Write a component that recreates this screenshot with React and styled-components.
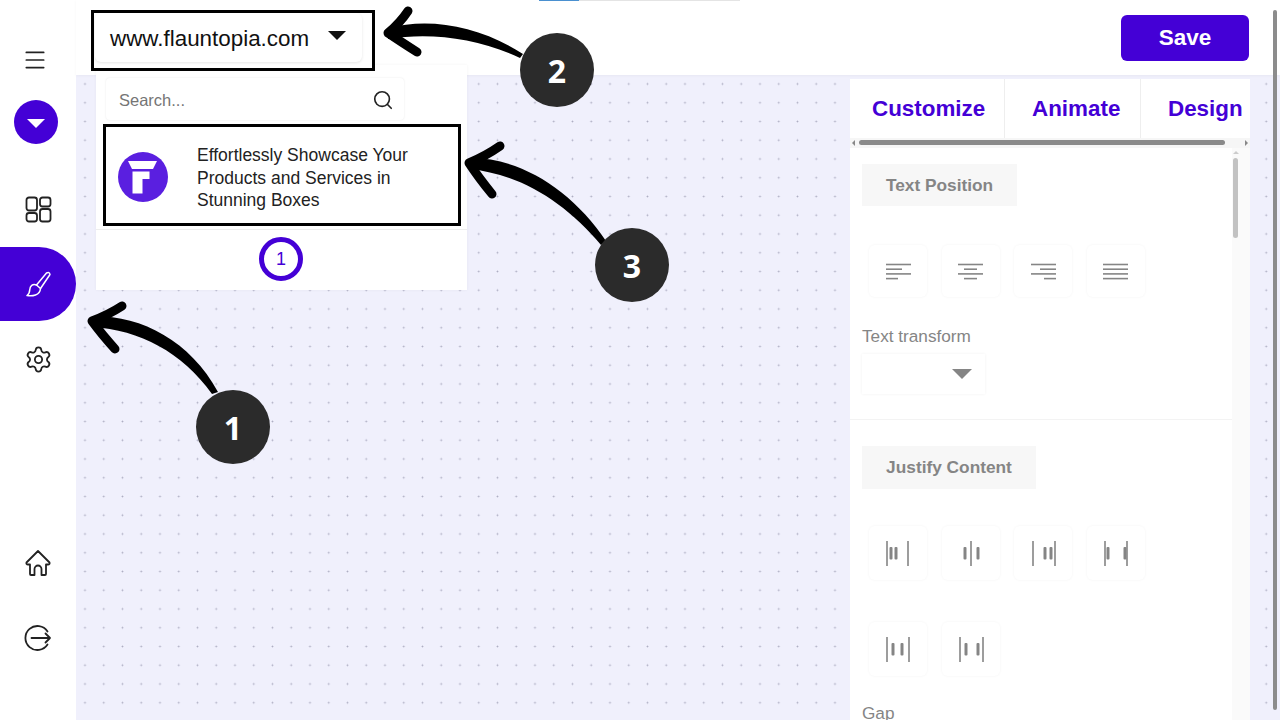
import React from "react";
import styled, { createGlobalStyle } from "styled-components";
import { Settings, Search, Menu } from "lucide-react";

const PURPLE = "#4400d6";
const GRAY = "#858585";

const Global = createGlobalStyle`
  html, body { margin: 0; padding: 0; height: 100%; overflow: hidden; }
  body { font-family: "Liberation Sans", Arial, sans-serif; background: #fff; }
  * { box-sizing: border-box; }
`;

const Page = styled.div`
  position: relative;
  display: flex;
  width: 1280px;
  height: 720px;
  overflow: hidden;
`;

const Sidebar = styled.nav`
  width: 76px;
  flex: none;
  background: #fff;
  display: flex;
  flex-direction: column;
  padding-top: 44px;
  color: #222;
`;

const SideItem = styled.div`
  height: ${(p) => p.$h}px;
  margin-top: ${(p) => p.$mt || 0}px;
  padding-right: ${(p) => p.$pr || 0}px;
  display: flex;
  align-items: center;
  justify-content: center;
`;

const ActiveItem = styled.div`
  width: 76px;
  height: 74px;
  margin-top: 24px;
  background: ${PURPLE};
  border-radius: 0 37px 37px 0;
  color: #fff;
  display: flex;
  align-items: center;
  justify-content: center;
`;

const RoundCaret = styled.div`
  width: 44px;
  height: 44px;
  border-radius: 50%;
  background: ${PURPLE};
  display: flex;
  align-items: center;
  justify-content: center;
  &::after {
    content: "";
    border-left: 9px solid transparent;
    border-right: 9px solid transparent;
    border-top: 9px solid #fff;
    margin-top: 2px;
  }
`;

const Main = styled.div`
  position: relative;
  flex: 1;
  display: flex;
  flex-direction: column;
  min-width: 0;
`;

const TopBar = styled.header`
  position: relative;
  height: 75px;
  flex: none;
  background: #fff;
  display: flex;
  justify-content: space-between;
  align-items: flex-start;
  padding: 10px 31px 0 15px;
  box-shadow: 0 1px 3px rgba(0, 0, 0, 0.04);
`;

const TopProgress = styled.div`
  position: absolute;
  top: 0;
  left: 463px;
  width: 201px;
  height: 1px;
  background: linear-gradient(to right, #4a90d0 40px, #e4e4e4 40px);
`;

const Highlight = styled.div`
  position: relative;
  z-index: 3;
  width: 284px;
  height: 61px;
  border: 3px solid #000;
  background: #fff;
  padding: 0 10px 6px 1px;
`;

const SiteSelect = styled.div`
  height: 100%;
  padding: 2px 16px 0 15px;
  border-radius: 6px;
  box-shadow: 0 1px 3px rgba(0, 0, 0, 0.1);
  display: flex;
  align-items: center;
  justify-content: space-between;
  font-size: 22.4px;
  color: #111;
  &::after {
    content: "";
    border-left: 9.5px solid transparent;
    border-right: 9.5px solid transparent;
    border-top: 9px solid #111;
    margin-bottom: 7px;
  }
`;

const SaveButton = styled.button`
  width: 128px;
  height: 46px;
  margin-top: 5px;
  border: 0;
  border-radius: 6px;
  background: ${PURPLE};
  color: #fff;
  font-family: inherit;
  font-size: 22.5px;
  font-weight: 700;
`;

const Canvas = styled.main`
  flex: 1;
  min-height: 0;
  display: flex;
  justify-content: flex-end;
  padding: 4px 30px 0 0;
  background-color: #f0f0fc;
  background-image: radial-gradient(circle, #adadc2 0.8px, transparent 1.1px);
  background-size: 18.75px 18.75px;
  background-position: -0.4px -0.4px;
`;

const DropMenu = styled.div`
  position: absolute;
  left: 20px;
  top: 65px;
  width: 371px;
  height: 225px;
  background: #fff;
  box-shadow: 0 0 3px rgba(0, 0, 0, 0.05);
  padding-top: 13px;
  display: flex;
  flex-direction: column;
  z-index: 2;
`;

const SearchBox = styled.div`
  width: 298px;
  height: 42px;
  margin-left: 10px;
  padding: 2px 10px 0 13px;
  border-radius: 4px;
  box-shadow: 0 0 2px rgba(0, 0, 0, 0.1);
  display: flex;
  align-items: center;
  justify-content: space-between;
  font-size: 16.5px;
  color: #757575;
  svg { color: #222; }
`;

const MenuItem = styled.div`
  width: 358px;
  height: 102px;
  margin: 4px 0 0 7px;
  border: 3px solid #000;
  padding: 4px 0 0 12px;
  display: flex;
  align-items: center;
  gap: 29px;
`;

const ItemText = styled.div`
  margin-top: 2px;
  font-size: 17.5px;
  line-height: 22.7px;
  color: #222;
  white-space: nowrap;
`;

const Pager = styled.div`
  margin-top: 3px;
  border-top: 1px solid #eee;
  padding: 7px 1px 0 0;
  display: flex;
  justify-content: center;
`;

const PageNum = styled.div`
  width: 44px;
  height: 44px;
  border-radius: 50%;
  border: 5px solid ${PURPLE};
  display: flex;
  align-items: center;
  justify-content: center;
  font-size: 18px;
  color: ${PURPLE};
`;

const Panel = styled.aside`
  width: 400px;
  background: #fff;
  display: flex;
  flex-direction: column;
  min-height: 0;
`;

const Tabs = styled.div`
  height: 59px;
  flex: none;
  display: flex;
  white-space: nowrap;
`;

const Tab = styled.div`
  width: ${(p) => p.$w}px;
  padding-left: ${(p) => p.$pl}px;
  display: flex;
  align-items: center;
  font-size: 22.4px;
  font-weight: 700;
  color: ${PURPLE};
  border-right: ${(p) => (p.$last ? "0" : "1px solid #eee")};
`;

const HScroll = styled.div`
  position: relative;
  height: 10px;
  flex: none;
  background: #f6f6f6;
  &::before {
    content: "";
    position: absolute;
    left: 9px;
    top: 2px;
    width: 366px;
    height: 5px;
    border-radius: 3px;
    background: #8a8a8a;
  }
`;

const ScrollArrow = styled.span`
  position: absolute;
  top: 2px;
  ${(p) => p.$side}: 2px;
  border-top: 3px solid transparent;
  border-bottom: 3px solid transparent;
  ${(p) => (p.$side === "left" ? "border-right" : "border-left")}: 3px solid #888;
`;

const PanelBody = styled.div`
  flex: 1;
  min-height: 0;
  display: flex;
  overflow: hidden;
`;

const Content = styled.div`
  width: 382px;
  flex: none;
`;

const VScroll = styled.div`
  position: relative;
  width: 18px;
  flex: none;
  background: #fafafa;
  &::before {
    content: "";
    position: absolute;
    left: 1px;
    top: 10px;
    width: 5px;
    height: 80px;
    border-radius: 3px;
    background: #c2c2c2;
  }
  &::after {
    content: "";
    position: absolute;
    left: 1px;
    top: 3px;
    border-left: 3px solid transparent;
    border-right: 3px solid transparent;
    border-bottom: 3px solid #ccc;
  }
`;

const Section = styled.section`
  padding: ${(p) => p.$top}px 0 ${(p) => p.$bottom || 0}px 12px;
  border-bottom: ${(p) => (p.$divider ? "1px solid #f3f3f3" : "0")};
`;

const Chip = styled.div`
  width: ${(p) => p.$w}px;
  height: ${(p) => p.$h}px;
  background: #f7f7f7;
  display: flex;
  align-items: center;
  justify-content: center;
  font-size: 17.3px;
  font-weight: 700;
  color: ${GRAY};
`;

const ToolGrid = styled.div`
  display: grid;
  grid-template-columns: repeat(4, 58px);
  column-gap: 14.5px;
  row-gap: 42px;
  margin: ${(p) => p.$mt}px 0 0 7px;
`;

const ToolButton = styled.div`
  height: ${(p) => p.$h}px;
  border-radius: 6px;
  box-shadow: 0 0 3px rgba(0, 0, 0, 0.05);
  display: flex;
  align-items: center;
  justify-content: center;
`;

const FieldLabel = styled.div`
  margin-top: ${(p) => p.$mt}px;
  font-size: 17.2px;
  line-height: 20px;
  color: ${GRAY};
`;

const FieldSelect = styled.div`
  width: 123px;
  height: 40px;
  margin-top: 8px;
  padding: 0 13px 0 0;
  box-shadow: 0 0 3px rgba(0, 0, 0, 0.06);
  display: flex;
  align-items: center;
  justify-content: flex-end;
  &::after {
    content: "";
    border-left: 10px solid transparent;
    border-right: 10px solid transparent;
    border-top: 10px solid ${GRAY};
  }
`;

const PageScroll = styled.div`
  position: absolute;
  right: 3px;
  top: 10px;
  width: 4px;
  height: 700px;
  border-radius: 2px;
  background: #8c8c8c;
  z-index: 3;
`;

const Overlay = styled.svg`
  position: absolute;
  inset: 0;
  z-index: 4;
  pointer-events: none;
`;

const Badge = styled.div`
  position: absolute;
  left: ${(p) => p.$x - 37}px;
  top: ${(p) => p.$y - 37}px;
  width: 74px;
  height: 74px;
  border-radius: 50%;
  background: #2b2b2b;
  color: #fff;
  font-family: "Noto Sans", sans-serif;
  font-size: 32px;
  font-weight: 700;
  display: flex;
  align-items: center;
  justify-content: center;
  z-index: 5;
`;

const ALIGN_LINES = {
  left: [[0, 25], [0, 16], [0, 25], [0, 12]],
  center: [[0, 25], [6, 19], [0, 25], [6, 19]],
  right: [[0, 25], [9, 25], [0, 25], [13, 25]],
  justify: [[0, 25], [0, 25], [0, 25], [0, 25]],
};

function AlignIcon({ kind }) {
  return (
    <svg width="25" height="17" viewBox="0 0 25 17">
      {ALIGN_LINES[kind].map(([a, b], i) => (
        <line key={i} x1={a} x2={b} y1={1.5 + i * 4.7} y2={1.5 + i * 4.7} stroke={GRAY} strokeWidth="1.6" />
      ))}
    </svg>
  );
}

// x positions measured from the left of a 58px button
const JUSTIFY = [
  { lines: [18, 39], bars: [22, 27] },
  { lines: [29], bars: [23, 36] },
  { lines: [19, 41], bars: [31, 37] },
  { lines: [18, 40], bars: [21, 38] },
  { lines: [18, 40], bars: [24, 33] },
  { lines: [18, 41], bars: [24, 36] },
];

function JustifyIcon({ lines, bars }) {
  return (
    <svg width="58" height="54" viewBox="0 0 58 54">
      {lines.map((x) => (
        <rect key={x} x={x - 0.8} y="15" width="1.6" height="25" fill={GRAY} />
      ))}
      {bars.map((x) => (
        <rect key={x} x={x - 1.5} y="21" width="3" height="12.5" rx="1" fill={GRAY} />
      ))}
    </svg>
  );
}

function LogoMark() {
  return (
    <svg width="50" height="50" viewBox="0 0 50 50" style={{ flex: "none" }}>
      <circle cx="25" cy="25" r="25" fill="#5a1fe0" />
      <path d="M10 9H39L35 17H14Z M14.5 19.5H31.5V27H24.5V41.5H14.5Z" fill="#fff" />
    </svg>
  );
}

function DashboardIcon() {
  return (
    <svg width="27" height="27" viewBox="0 0 27 27" fill="none" stroke="#222" strokeWidth="1.8">
      <rect x="1.5" y="1.5" width="10.5" height="13" rx="2.5" />
      <rect x="15" y="1.5" width="10.5" height="9" rx="2.5" />
      <rect x="1.5" y="17" width="10.5" height="8.5" rx="2.5" />
      <rect x="15" y="13" width="10.5" height="12.5" rx="2.5" />
    </svg>
  );
}

function BrushIcon() {
  return (
    <svg width="25" height="26" viewBox="0 0 25 26" fill="none" stroke="#fff" strokeWidth="1.5" strokeLinejoin="round" strokeLinecap="round">
      <path d="M10.5 14 20.5 2Q23.5 0.5 24 3.5L14.5 17.5" />
      <path d="M10.5 14C6.5 12.5 4 15 3.8 18.5 3.6 21.5 2.5 23.5 1 24.5 6 25.5 14 24.5 14.5 17.5Z" />
    </svg>
  );
}

function HomeIcon() {
  return (
    <svg width="26" height="26" viewBox="0 0 26 26" fill="none" stroke="#222" strokeWidth="1.8" strokeLinejoin="round">
      <path d="M13 1 1.5 12.5Q1 14.5 3 14.5H5V24Q5 25 6 25H9.5V19A3.5 3.5 0 0 1 16.5 19V25H20Q21 25 21 24V14.5H23Q25 14.5 24.5 12.5Z" />
    </svg>
  );
}

function LogoutIcon() {
  return (
    <svg width="28" height="28" viewBox="0 0 28 28" fill="none" stroke="#222" strokeWidth="1.8" strokeLinecap="round" strokeLinejoin="round">
      <path d="M23.5 7.5A12 12 0 1 0 23.5 20.5" />
      <path d="M7.5 14H26M21.5 9.5 26 14l-4.5 4.5" />
    </svg>
  );
}

function Arrow({ tip, up, down, shaft }) {
  return (
    <g>
      <path d={shaft} fill="#000" />
      <path
        d={`M${up[0]} ${up[1]} Q${(up[0] + tip[0]) / 2 + 2} ${(up[1] + tip[1]) / 2 + 1} ${tip[0]} ${tip[1]} Q${(down[0] + tip[0]) / 2 - 2} ${(down[1] + tip[1]) / 2 - 1} ${down[0]} ${down[1]}`}
        fill="none"
        stroke="#000"
        strokeWidth="9"
        strokeLinecap="round"
        strokeLinejoin="round"
      />
    </g>
  );
}

export default function App() {
  return (
    <>
      <Global />
      <Page>
        <Sidebar>
          <SideItem $h={32} $pr={6}>
            <Menu size={26} strokeWidth={1.6} />
          </SideItem>
          <SideItem $h={44} $mt={24} $pr={4}>
            <RoundCaret />
          </SideItem>
          <SideItem $h={27} $mt={52}>
            <DashboardIcon />
          </SideItem>
          <ActiveItem>
            <BrushIcon />
          </ActiveItem>
          <SideItem $h={30} $mt={23}>
            <Settings size={29} strokeWidth={1.5} />
          </SideItem>
          <SideItem $h={26} $mt={176}>
            <HomeIcon />
          </SideItem>
          <SideItem $h={30} $mt={47}>
            <LogoutIcon />
          </SideItem>
        </Sidebar>

        <Main>
          <TopBar>
            <Highlight>
              <SiteSelect>www.flauntopia.com</SiteSelect>
            </Highlight>
            <SaveButton>Save</SaveButton>
            <TopProgress />
          </TopBar>

          <DropMenu>
            <SearchBox>
              Search...
              <Search size={22} strokeWidth={1.8} />
            </SearchBox>
            <MenuItem>
              <LogoMark />
              <ItemText>
                Effortlessly Showcase Your
                <br />
                Products and Services in
                <br />
                Stunning Boxes
              </ItemText>
            </MenuItem>
            <Pager>
              <PageNum>1</PageNum>
            </Pager>
          </DropMenu>

          <Canvas>
            <Panel>
              <Tabs>
                <Tab $w={155} $pl={22}>Customize</Tab>
                <Tab $w={136} $pl={27}>Animate</Tab>
                <Tab $w={109} $pl={27} $last>Design</Tab>
              </Tabs>
              <HScroll>
                <ScrollArrow $side="left" />
                <ScrollArrow $side="right" />
              </HScroll>
              <PanelBody>
                <Content>
                  <Section $top={16} $bottom={25} $divider>
                    <Chip $w={155} $h={42}>Text Position</Chip>
                    <ToolGrid $mt={39}>
                      {["left", "center", "right", "justify"].map((kind) => (
                        <ToolButton key={kind} $h={52}>
                          <AlignIcon kind={kind} />
                        </ToolButton>
                      ))}
                    </ToolGrid>
                    <FieldLabel $mt={29}>Text transform</FieldLabel>
                    <FieldSelect />
                  </Section>
                  <Section $top={26}>
                    <Chip $w={174} $h={43}>Justify Content</Chip>
                    <ToolGrid $mt={37}>
                      {JUSTIFY.map((icon, i) => (
                        <ToolButton key={i} $h={54}>
                          <JustifyIcon {...icon} />
                        </ToolButton>
                      ))}
                    </ToolGrid>
                    <FieldLabel $mt={27}>Gap</FieldLabel>
                  </Section>
                </Content>
                <VScroll />
              </PanelBody>
            </Panel>
          </Canvas>
        </Main>

        <PageScroll />

        <Overlay width="1280" height="720" viewBox="0 0 1280 720">
          <Arrow
            tip={[92, 321]}
            up={[122, 306]}
            down={[115, 349]}
            shaft="M92 316 C140 315 190 340 218 392 L212 394 C182 352 140 330 92 327 Z"
          />
          <Arrow
            tip={[388, 33]}
            up={[408, 11]}
            down={[417, 52]}
            shaft="M388 28 C430 17 480 26 523 54 L520 58 C478 38 430 32 388 39 Z"
          />
          <Arrow
            tip={[469, 163]}
            up={[500, 146]}
            down={[492, 194]}
            shaft="M469 158 C520 157 572 190 606 241 L601 245 C565 202 520 174 469 169 Z"
          />
        </Overlay>

        <Badge $x={233} $y={427}>1</Badge>
        <Badge $x={557} $y={70}>2</Badge>
        <Badge $x={632} $y={265}>3</Badge>
      </Page>
    </>
  );
}
